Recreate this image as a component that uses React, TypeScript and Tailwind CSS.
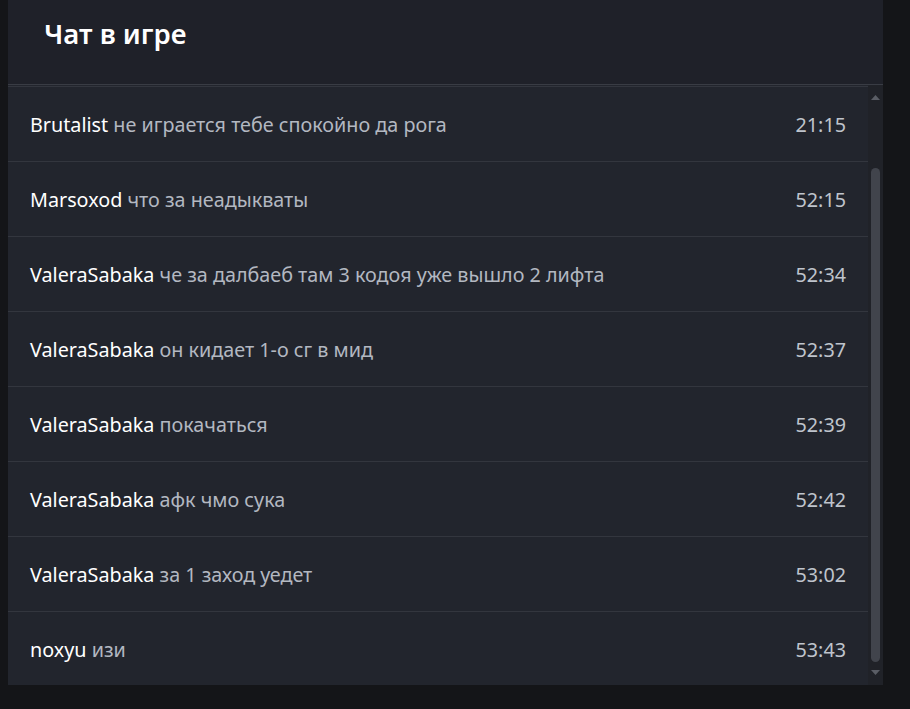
import { useEffect, useRef } from "react"

const messages = [
  { name: "Brutalist", text: "не играется тебе спокойно да рога", time: "21:15" },
  { name: "Marsoxod", text: "что за неадыкваты", time: "52:15" },
  { name: "ValeraSabaka", text: "че за далбаеб там 3 кодоя уже вышло 2 лифта", time: "52:34" },
  { name: "ValeraSabaka", text: "он кидает 1-о сг в мид", time: "52:37" },
  { name: "ValeraSabaka", text: "покачаться", time: "52:39" },
  { name: "ValeraSabaka", text: "афк чмо сука", time: "52:42" },
  { name: "ValeraSabaka", text: "за 1 заход уедет", time: "53:02" },
  { name: "noxyu", text: "изи", time: "53:43" },
]

export default function App() {
  const listRef = useRef<HTMLDivElement>(null)

  useEffect(() => {
    if (listRef.current) listRef.current.scrollTop = 81
  }, [])

  return (
    <div className="w-[910px] h-[709px] bg-[#141518] pl-2 font-['Noto_Sans',sans-serif]">
      <div className="w-[875px] h-[685px] flex flex-col bg-[#1f2129]">
        {/* Заголовок */}
        <div className="h-[85px] shrink-0 border-b border-[#393c44] pl-9 pt-[13px]">
          <h2 className="text-[27.5px] font-semibold text-white leading-normal">Чат в игре</h2>
        </div>

        <div className="flex-1 flex min-h-0 bg-[#22252d]">
          {/* Сообщения (прокручено вниз, верхняя строка скрыта) */}
          <div ref={listRef} className="flex-1 overflow-hidden py-2">
            <div className="h-[75px] border-b border-[#33363e]" />
            {messages.map((m, i) => (
              <div
                key={i}
                className="h-[75px] flex items-center justify-between border-b border-[#33363e] px-[22px] pt-px text-[19.75px]"
              >
                <div>
                  <span className="text-white">{m.name}</span>{" "}
                  <span className="text-[#b3b8c1]">{m.text}</span>
                </div>
                <span className="text-[#bfc4cc]">{m.time}</span>
              </div>
            ))}
          </div>

          {/* Скроллбар */}
          <div className="w-[15px] shrink-0 bg-[#202228] flex flex-col items-center pt-[10px]">
            <svg width="9" height="5" viewBox="0 0 9 5">
              <path d="M4.5 0L9 5H0Z" fill="#5a5d65" />
            </svg>
            <div className="mt-[68px] w-[9px] h-[494px] rounded-full bg-[#41444c]" />
            <svg width="9" height="5" viewBox="0 0 9 5" className="mt-[8px]">
              <path d="M0 0H9L4.5 5Z" fill="#5a5d65" />
            </svg>
          </div>
        </div>
      </div>
    </div>
  )
}
